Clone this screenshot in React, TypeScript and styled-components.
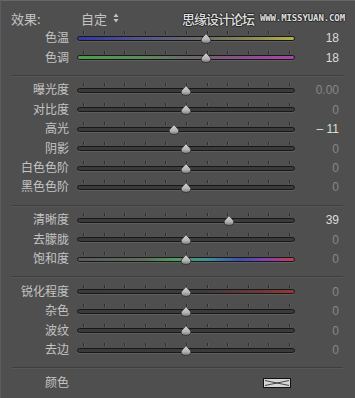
import React from "react";
import styled, { createGlobalStyle } from "styled-components";

const Global = createGlobalStyle`
  html, body { margin: 0; padding: 0; background: #4f4f4f; }
  body { width: 355px; height: 398px; overflow: hidden; }
`;

const Panel = styled.div`
  box-sizing: border-box;
  width: 355px;
  height: 398px;
  background: #4f4f4f;
  border-top: 1px solid #666;
  border-left: 1px solid #5c5c5c;
  padding-top: 7px;
  font-family: "Noto Sans CJK SC", "Liberation Sans", sans-serif;
  color: #c6c6c6;
`;

const Header = styled.div`
  height: 20.5px;
  display: flex;
  align-items: center;
  padding-left: 10px;
  font-size: 13px;
`;

const HeaderLabel = styled.span`
  width: 70px;
  color: #c2c2c2;
`;

const Preset = styled.span`
  display: flex;
  align-items: center;
  gap: 6px;
  color: #c2c2c2;
`;

const Watermark = styled.div`
  margin-left: auto;
  padding-right: 10px;
  display: flex;
  align-items: center;
  gap: 6px;
  color: #dedede;
  text-shadow: 1px 0 0 #2a2a2a, -1px 0 0 #2a2a2a, 0 1px 0 #2a2a2a, 0 -1px 0 #2a2a2a;
`;

const WmCn = styled.span`
  font-size: 13px;
  font-weight: 500;
  letter-spacing: -1px;
`;

const WmEn = styled.span`
  font-family: "DejaVu Sans Mono", monospace;
  font-size: 9px;
  font-weight: bold;
  letter-spacing: -0.1px;
`;

const Section = styled.div<{ $top?: number }>`
  padding-top: ${(p) => (p.$top ?? 5)}px;
  padding-bottom: 7.5px;
`;

const Separator = styled.div`
  height: 1px;
  margin: 0 12px 0 11px;
  background: #3e3e3e;
  box-shadow: 0 1px 0 #575757;
`;

const Row = styled.div`
  display: grid;
  grid-template-columns: 76px 218px 44px;
  height: 19.4px;
  align-items: center;
`;

const Label = styled.span`
  text-align: right;
  padding-right: 8px;
  font-size: 12px;
  line-height: 1;
  color: #c4c4c4;
  position: relative;
  top: -1px;
`;

const Value = styled.span<{ $bright: boolean }>`
  text-align: right;
  font-family: "Liberation Sans", sans-serif;
  font-size: 12px;
  color: ${(p) => (p.$bright ? "#dcdcdc" : "#878787")};
`;

const SliderArea = styled.div`
  position: relative;
  height: 100%;
  display: flex;
  align-items: center;
`;

const Bar = styled.div<{ $bg: string }>`
  box-sizing: border-box;
  width: 100%;
  height: 5px;
  border: 1px solid #181818;
  border-radius: 2.5px;
  background: ${(p) => p.$bg};
  box-shadow: 0 1px 0 #5e5e5e;
`;

const Ticks = styled.div`
  position: absolute;
  left: 6px;
  right: 5px;
  top: calc(50% - 7px);
  height: 3px;
  display: flex;
  justify-content: space-between;
`;

const Tick = styled.span`
  width: 1px;
  height: 3px;
  background: #2c2c2c;
  box-shadow: 1px 0 0 #5c5c5c;
`;

const Thumb = styled.svg`
  position: absolute;
  top: calc(50% - 5.5px);
  width: 12px;
  height: 11px;
  margin-left: -6px;
`;

const Swatch = styled.svg`
  justify-self: end;
  margin-right: 4px;
  width: 28px;
  height: 10px;
`;

type SliderDef = {
  label: string;
  value: number;
  text: string;
  bg?: string;
};

const GRAY = "#3a3a3a";

const sections: SliderDef[][] = [
  [
    {
      label: "色温",
      value: 18,
      text: "18",
      bg: "linear-gradient(90deg, #3636a6 0%, #55558a 30%, #6a6a6a 55%, #8a8a56 80%, #b2b24a 100%)",
    },
    {
      label: "色调",
      value: 18,
      text: "18",
      bg: "linear-gradient(90deg, #48a048 0%, #5c8a5c 30%, #6a6a6a 50%, #8a508a 75%, #aa44aa 100%)",
    },
  ],
  [
    { label: "曝光度", value: 0, text: "0.00" },
    { label: "对比度", value: 0, text: "0" },
    { label: "高光", value: -11, text: "– 11" },
    { label: "阴影", value: 0, text: "0" },
    { label: "白色色阶", value: 0, text: "0" },
    { label: "黑色色阶", value: 0, text: "0" },
  ],
  [
    { label: "清晰度", value: 39, text: "39" },
    { label: "去朦胧", value: 0, text: "0" },
    {
      label: "饱和度",
      value: 0,
      text: "0",
      bg: "linear-gradient(90deg, #5a5a5a 0%, #5e6e5e 30%, #4f9a5f 45%, #3f8f9a 60%, #3f4fb0 75%, #8a3fa8 88%, #c03f4f 100%)",
    },
  ],
  [
    {
      label: "锐化程度",
      value: 0,
      text: "0",
      bg: "linear-gradient(90deg, #3a3a3a 0%, #3f3a3a 60%, #6e3838 85%, #963838 100%)",
    },
    { label: "杂色", value: 0, text: "0" },
    { label: "波纹", value: 0, text: "0" },
    { label: "去边", value: 0, text: "0" },
  ],
];

const ThumbIcon: React.FC<{ left: number }> = ({ left }) => (
  <Thumb viewBox="0 0 12 11" style={{ left }}>
    <defs>
      <linearGradient id="tg" x1="0" y1="0" x2="0" y2="1">
        <stop offset="0" stopColor="#d6d6d6" />
        <stop offset="0.6" stopColor="#b4b4b4" />
        <stop offset="1" stopColor="#7c7c7c" />
      </linearGradient>
    </defs>
    <path
      d="M6 0.6 L10.8 6 Q11.4 10.4 6 10.4 Q0.6 10.4 1.2 6 Z"
      fill="url(#tg)"
      stroke="#2b2b2b"
      strokeWidth="0.8"
    />
  </Thumb>
);

const Slider: React.FC<{ def: SliderDef }> = ({ def }) => {
  const center = 109;
  const pos = center + (def.value / 100) * 109;
  return (
    <Row>
      <Label>{def.label}</Label>
      <SliderArea>
        <Bar $bg={def.bg ?? GRAY} />
        <Ticks>
          {Array.from({ length: 11 }).map((_, i) => (
            <Tick key={i} />
          ))}
        </Ticks>
        <ThumbIcon left={pos} />
      </SliderArea>
      <Value $bright={def.value !== 0}>{def.text}</Value>
    </Row>
  );
};

const UpDown = () => (
  <svg width="6" height="10" viewBox="0 0 6 10">
    <path d="M3 0.5 L5.5 4 L0.5 4 Z" fill="#c2c2c2" />
    <path d="M3 9.5 L5.5 6 L0.5 6 Z" fill="#c2c2c2" />
  </svg>
);

export default function App() {
  return (
    <>
      <Global />
      <Panel>
        <Header>
          <HeaderLabel>效果:</HeaderLabel>
          <Preset>
            自定
            <UpDown />
          </Preset>
          <Watermark>
            <WmCn>思缘设计论坛</WmCn>
            <WmEn>WWW.MISSYUAN.COM</WmEn>
          </Watermark>
        </Header>
        {sections.map((sec, si) => (
          <React.Fragment key={si}>
            {si > 0 && <Separator />}
            <Section $top={si === 0 ? 0 : 5}>
              {sec.map((d) => (
                <Slider key={d.label} def={d} />
              ))}
            </Section>
          </React.Fragment>
        ))}
        <Separator />
        <Section $top={5}>
          <Row>
            <Label>颜色</Label>
            <Swatch viewBox="0 0 28 10">
              <rect x="0.5" y="0.5" width="27" height="9" fill="#d6d6d6" stroke="#111" />
              <path d="M2 2.5 Q9 4 14 5 Q19 4 26 2.5" fill="none" stroke="#333" strokeWidth="0.9" />
              <path d="M2 7.5 Q9 6 14 5 Q19 6 26 7.5" fill="none" stroke="#333" strokeWidth="0.9" />
            </Swatch>
            <span />
          </Row>
        </Section>
      </Panel>
    </>
  );
}
